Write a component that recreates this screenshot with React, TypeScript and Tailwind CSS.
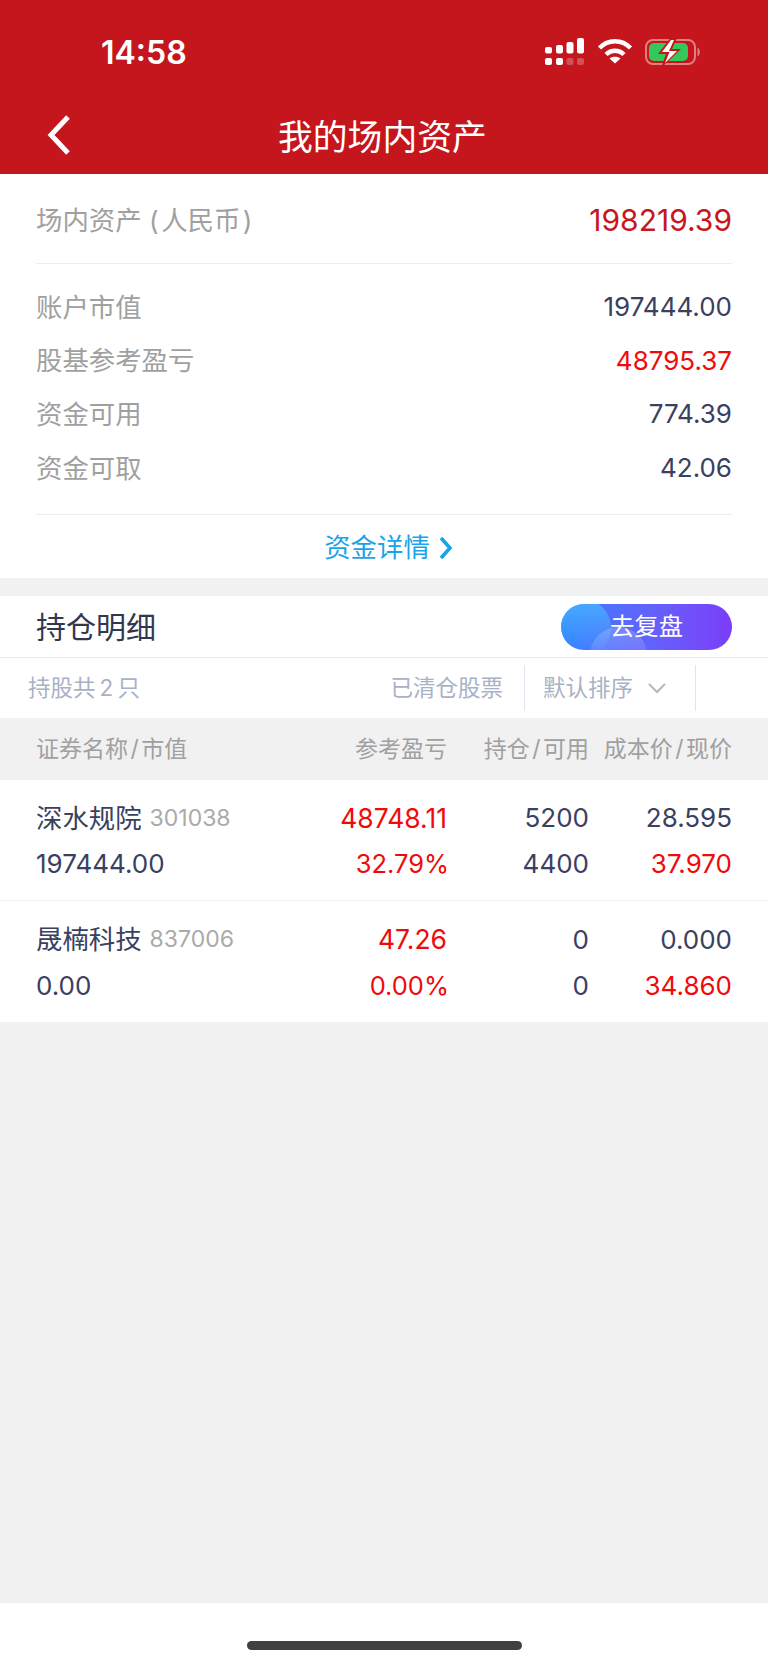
import React from "react";

const font = { fontFamily: '"Inter","Noto Sans CJK SC",sans-serif' };

function StatusIcons() {
  return (
    <svg width="160" height="30" viewBox="0 0 160 30" fill="none">
      <g fill="#fff">
        <rect x="1" y="9" width="7" height="6.5" rx="2" />
        <rect x="12" y="7" width="7" height="8.5" rx="2" />
        <rect x="22.5" y="4" width="7" height="11.5" rx="2" />
        <rect x="33" y="0" width="7" height="15.5" rx="2" />
        <rect x="1" y="20" width="7" height="7" rx="2" />
        <rect x="12" y="20" width="7" height="7" rx="2" />
        <rect x="22.5" y="20" width="7" height="7" rx="2" opacity="0.25" />
        <rect x="33" y="20" width="7" height="7" rx="2" opacity="0.25" />
      </g>
      <g stroke="#fff" strokeWidth="4.4" fill="none">
        <path d="M55.5 10 C64 1 78 1 86.5 10" />
        <path d="M62 16.5 C67 11.5 75 11.5 80 16.5" />
      </g>
      <path d="M71 25.5 L65.5 20.5 C68 18 74 18 76.5 20.5 Z" fill="#fff" />
      <rect x="102" y="2" width="49" height="24" rx="7" stroke="#fff" strokeOpacity="0.45" strokeWidth="2" />
      <path d="M153.5 9.5 C156.5 10.5 156.5 17.5 153.5 18.5 Z" fill="#fff" fillOpacity="0.45" />
      <rect x="105" y="5" width="39" height="18" rx="5" fill="#34c759" />
      <path d="M128 -2 L114 16 L122 16 L117 30 L137 11 L128 11 L134 -2 Z" fill="#c4161c" />
      <path d="M127 2 L118 14 L125.5 14 L121 25 L133 13 L125 13 L130 2 Z" fill="#fff" />
    </svg>
  );
}

function InfoRow({ label, value, color }: { label: string; value: string; color: string }) {
  return (
    <div className="flex h-[53.7px] items-center justify-between">
      <span className="text-[26.4px] leading-none text-[#a0a0a0]">{label}</span>
      <span className={`text-[26px] leading-none ${color}`}>{value}</span>
    </div>
  );
}

function Slash() {
  return <span className="mx-[2.5px]">/</span>;
}

function StockRow({ name, code, mv, pl, pct, hold, avail, cost, price, border }: {
  name: string; code: string; mv: string; pl: string; pct: string; hold: string; avail: string; cost: string; price: string; border?: boolean;
}) {
  return (
    <div className={`flex h-[121px] flex-col justify-center gap-[18px] bg-white px-[36px] pt-[2px] ${border ? "border-b border-[#f2f2f2]" : ""}`}>
      <div className="flex h-[28px] items-center text-[26px] leading-none text-[#3a4060]">
        <div className="flex flex-1 items-center">
          <span className="text-[26.4px]">{name}</span>
          <span className="ml-[8px] text-[23px] text-[#aaaaaa]">{code}</span>
        </div>
        <div className="w-[147px] text-right text-[26.5px] text-[#f00a0a]">{pl}</div>
        <div className="w-[142px] text-right">{hold}</div>
        <div className="w-[143px] text-right">{cost}</div>
      </div>
      <div className="flex h-[28px] items-center text-[26px] leading-none text-[#3a4060]">
        <div className="flex-1">{mv}</div>
        <div className="mr-[-2px] w-[149px] text-right text-[25.5px] text-[#f00a0a]">{pct}</div>
        <div className="w-[142px] text-right">{avail}</div>
        <div className="w-[143px] text-right text-[#f00a0a]">{price}</div>
      </div>
    </div>
  );
}

export default function App() {
  return (
    <div className="flex h-[1665px] w-[768px] flex-col overflow-hidden bg-[#f1f1f1]" style={font}>
      <header className="h-[174px] shrink-0 bg-[#c4161c] text-white">
        <div className="flex h-[88px] items-start justify-between pl-[101px] pr-[64px] pt-[33px]">
          <span className="mt-[1px] text-[32px] font-semibold leading-[38px]">14:58</span>
          <div className="mt-[5px]"><StatusIcons /></div>
        </div>
        <div className="flex h-[86px] items-center pl-[46px] pt-[8px]">
          <svg width="26" height="40" viewBox="0 0 26 40" fill="none" stroke="#fff" strokeWidth="5">
            <path d="M22 2 L5 20 L22 38" />
          </svg>
          <span className="ml-[206px] mt-[4px] text-[34.8px] leading-none">我的场内资产</span>
        </div>
      </header>

      <section className="h-[404px] shrink-0 bg-white px-[36px]">
        <div className="flex h-[90px] items-center justify-between border-b border-[#ececec] pt-[3px]">
          <span className="text-[26.4px] leading-none text-[#a0a0a0]">场内资产 (<span className="mx-[2.5px]">人民币</span>)</span>
          <span className="text-[30px] leading-none text-[#c8161d]">198219.39</span>
        </div>
        <div className="flex h-[251px] flex-col border-b border-[#ececec] pt-[16px]">
          <InfoRow label="账户市值" value="197444.00" color="text-[#3a4060]" />
          <InfoRow label="股基参考盈亏" value="48795.37" color="text-[#f00a0a]" />
          <InfoRow label="资金可用" value="774.39" color="text-[#3a4060]" />
          <InfoRow label="资金可取" value="42.06" color="text-[#3a4060]" />
        </div>
        <div className="flex h-[63px] items-center justify-center pl-[9px] pt-[2px] text-[26.4px] leading-none text-[#1ba3e8]">
          <span>资金详情</span>
          <svg className="ml-[8px]" width="15" height="24" viewBox="0 0 15 24" fill="none" stroke="#1ba3e8" strokeWidth="3.6">
            <path d="M3 2 L12 12 L3 22" />
          </svg>
        </div>
      </section>

      <div className="h-[18px] shrink-0" />

      <section className="flex h-[62px] shrink-0 items-center justify-between border-b border-[#e4e8f2] bg-white pl-[36px] pr-[36px]">
        <span className="text-[30px] leading-none text-[#32374f]">持仓明细</span>
        <div className="relative flex h-[46px] w-[171px] items-center justify-center overflow-hidden rounded-full bg-gradient-to-r from-[#2a80ff] to-[#7b3cf9]">
          <div className="absolute -left-[4px] -top-[4px] h-[56px] w-[54px] rounded-full bg-gradient-to-b from-[#4ab8ff]/80 to-transparent" />
          <div className="absolute left-[29px] top-[23px] h-[57px] w-[57px] rounded-full bg-gradient-to-b from-white/20 to-transparent" />
          <span className="relative text-[24.4px] leading-none text-white">去复盘</span>
        </div>
      </section>

      <section className="flex h-[60px] shrink-0 items-center bg-white text-[22.5px] leading-none text-[#a9b1c6]">
        <span className="ml-[28px] flex-1">持股共{"\u2009"}2{"\u2009"}只</span>
        <span>已清仓股票</span>
        <div className="ml-[21px] flex h-[46px] w-[172px] items-center border-x border-[#dfe4ee] pl-[18px]">
          <span>默认排序</span>
          <svg className="ml-[15px]" width="18" height="11" viewBox="0 0 18 11" fill="none" stroke="#b4b9c6" strokeWidth="2">
            <path d="M1 1 L9 9 L17 1" />
          </svg>
        </div>
        <div className="w-[72px]" />
      </section>

      <section className="flex h-[62px] shrink-0 items-center px-[36px] text-[23px] leading-none text-[#a0a0a0]">
        <div className="flex-1">证券名称<Slash />市值</div>
        <div className="w-[147px] text-right">参考盈亏</div>
        <div className="w-[142px] text-right">持仓<Slash />可用</div>
        <div className="w-[143px] text-right">成本价<Slash />现价</div>
      </section>

      <StockRow name="深水规院" code="301038" mv="197444.00" pl="48748.11" pct="32.79%" hold="5200" avail="4400" cost="28.595" price="37.970" border />
      <StockRow name="晟楠科技" code="837006" mv="0.00" pl="47.26" pct="0.00%" hold="0" avail="0" cost="0.000" price="34.860" />

      <div className="flex-1" />

      <footer className="flex h-[62px] shrink-0 items-start justify-center bg-white pt-[38px]">
        <div className="h-[9px] w-[275px] rounded-full bg-[#404040]" />
      </footer>
    </div>
  );
}
